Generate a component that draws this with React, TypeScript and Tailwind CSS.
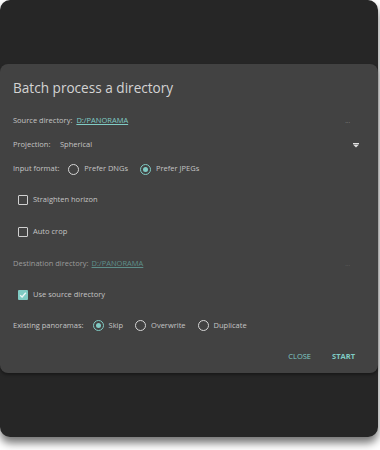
import React from "react";

const font = { fontFamily: '"Open Sans", "Noto Sans", sans-serif' };

function Radio({ checked }: { checked?: boolean }) {
  return (
    <span
      className={
        "flex h-[11px] w-[11px] items-center justify-center rounded-full border-[1.5px] " +
        (checked ? "border-[#80cbc4]" : "border-[#d6d6d6]")
      }
    >
      {checked && <span className="h-[5px] w-[5px] rounded-full bg-[#80cbc4]" />}
    </span>
  );
}

function Checkbox({ checked }: { checked?: boolean }) {
  if (checked) {
    return (
      <span className="flex h-[10px] w-[10px] items-center justify-center rounded-[1px] bg-[#80cbc4]">
        <svg width="8" height="8" viewBox="0 0 8 8" fill="none">
          <path d="M1.2 4.2 3.1 6 6.8 1.8" stroke="#eef7f6" strokeWidth="1.3" />
        </svg>
      </span>
    );
  }
  return <span className="h-[10px] w-[10px] rounded-[1px] border-[1.5px] border-[#d0d0d0]" />;
}

function RadioOption({ label, checked }: { label: string; checked?: boolean }) {
  return (
    <div className="flex items-center gap-[5px]">
      <Radio checked={checked} />
      <span>{label}</span>
    </div>
  );
}

export default function App() {
  return (
    <div className="h-[450px] w-[380px] overflow-hidden bg-white" style={font}>
      <div className="flex h-[437px] w-[378px] flex-col rounded-[10px] bg-[#262626] pt-[64px] shadow-[0_6px_8px_rgba(0,0,0,0.55)]">
        <div className="flex h-[309px] flex-col rounded-[8px] bg-[#424242] px-[13px] pt-[14px] text-[7.5px] text-[#c4c4c4] shadow-[0_2px_3px_rgba(0,0,0,0.35)]">
          <h1 className="h-[20px] text-[13.6px] leading-[20px] text-[#d4d4d4]">Batch process a directory</h1>

          <div className="mt-[11px] flex h-[24px] items-center">
            <span>Source directory:</span>
            <span className="ml-[4px] text-[#80cbc4] underline">D:/PANORAMA</span>
            <span className="ml-auto mr-[15px] text-[6px] leading-none text-[#9a9a9a]">...</span>
          </div>

          <div className="flex h-[24px] items-center">
            <span className="w-[47px]">Projection:</span>
            <span>Spherical</span>
            <svg className="ml-auto mr-[6px]" width="6" height="5" viewBox="0 0 6 5">
              <rect x="0" y="0" width="6" height="1" fill="#e0e0e0" />
              <path d="M0 1.5h6L3 4.5z" fill="#e0e0e0" />
            </svg>
          </div>

          <div className="flex h-[24px] items-center">
            <span>Input format:</span>
            <div className="ml-[9px] flex items-center gap-[12px]">
              <RadioOption label="Prefer DNGs" />
              <RadioOption label="Prefer JPEGs" checked />
            </div>
          </div>

          <div className="mt-[3px] flex h-[32px] items-center gap-[5px] pl-[5px]">
            <Checkbox />
            <span>Straighten horizon</span>
          </div>

          <div className="flex h-[32px] items-center gap-[5px] pl-[5px]">
            <Checkbox />
            <span>Auto crop</span>
          </div>

          <div className="flex h-[31px] items-center text-[#9c9c9c]">
            <span>Destination directory:</span>
            <span className="ml-[3px] text-[#5e8f8a] underline">D:/PANORAMA</span>
            <span className="ml-auto mr-[15px] text-[6px] leading-none text-[#6a6a6a]">...</span>
          </div>

          <div className="flex h-[31px] items-center gap-[5px] pl-[5px]">
            <Checkbox checked />
            <span>Use source directory</span>
          </div>

          <div className="flex h-[31px] items-center">
            <span>Existing panoramas:</span>
            <div className="ml-[9px] flex items-center gap-[12px]">
              <RadioOption label="Skip" checked />
              <RadioOption label="Overwrite" />
              <RadioOption label="Duplicate" />
            </div>
          </div>

          <div className="flex h-[32px] items-center justify-end gap-[21px] pr-[10px] text-[7.5px] text-[#80cbc4]">
            <button type="button">CLOSE</button>
            <button type="button" className="font-bold">START</button>
          </div>
        </div>
      </div>
    </div>
  );
}
